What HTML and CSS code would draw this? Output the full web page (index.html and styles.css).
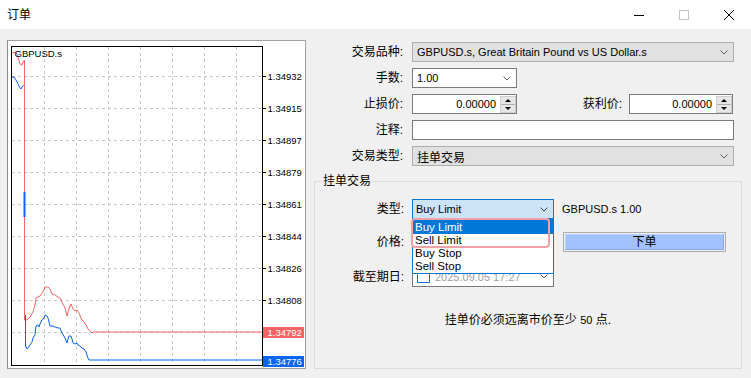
FILE: index.html
```html
<!DOCTYPE html>
<html lang="zh">
<head>
<meta charset="utf-8">
<title>订单</title>
<link rel="stylesheet" href="styles.css">
</head>
<body>
<div class="titlebar">
  <span class="title">订单</span>
  <div class="winbtns">
    <div class="winbtn"><svg width="10" height="10" viewBox="0 0 10 10"><line x1="0" y1="5.5" x2="10" y2="5.5" stroke="#000" stroke-width="1"/></svg></div>
    <div class="winbtn"><svg width="10" height="10" viewBox="0 0 10 10"><rect x="0.5" y="0.5" width="9" height="9" fill="none" stroke="#c4c4c4" stroke-width="1"/></svg></div>
    <div class="winbtn"><svg width="10" height="10" viewBox="0 0 10 10"><path d="M0 0 L10 10 M10 0 L0 10" stroke="#000" stroke-width="1"/></svg></div>
  </div>
</div>
<div class="content">
  <div class="chart">
    <svg class="axis" width="297" height="327" viewBox="0 0 297 327">
      <g stroke="#c8c8c8" stroke-width="1" stroke-dasharray="3 3">
        <line x1="36.5" y1="6" x2="36.5" y2="324"/>
        <line x1="68.5" y1="6" x2="68.5" y2="324"/>
        <line x1="100.5" y1="6" x2="100.5" y2="324"/>
        <line x1="132.5" y1="6" x2="132.5" y2="324"/>
        <line x1="164.5" y1="6" x2="164.5" y2="324"/>
        <line x1="196.5" y1="6" x2="196.5" y2="324"/>
        <line x1="228.5" y1="6" x2="228.5" y2="324"/>
        <line x1="4" y1="35.5" x2="254" y2="35.5"/>
        <line x1="4" y1="67.5" x2="254" y2="67.5"/>
        <line x1="4" y1="99.5" x2="254" y2="99.5"/>
        <line x1="4" y1="131.5" x2="254" y2="131.5"/>
        <line x1="4" y1="163.5" x2="254" y2="163.5"/>
        <line x1="4" y1="195.5" x2="254" y2="195.5"/>
        <line x1="4" y1="227.5" x2="254" y2="227.5"/>
        <line x1="4" y1="259.5" x2="254" y2="259.5"/>
        <line x1="4" y1="291.5" x2="254" y2="291.5"/>
      </g>
      <g stroke="#000" stroke-width="1">
        <line x1="254" y1="35.5" x2="258" y2="35.5"/>
        <line x1="254" y1="67.5" x2="258" y2="67.5"/>
        <line x1="254" y1="99.5" x2="258" y2="99.5"/>
        <line x1="254" y1="131.5" x2="258" y2="131.5"/>
        <line x1="254" y1="163.5" x2="258" y2="163.5"/>
        <line x1="254" y1="195.5" x2="258" y2="195.5"/>
        <line x1="254" y1="227.5" x2="258" y2="227.5"/>
        <line x1="254" y1="259.5" x2="258" y2="259.5"/>
      </g>
      <g class="lbl-txt">
        <text x="259.5" y="39">1.34932</text>
        <text x="259.5" y="71">1.34915</text>
        <text x="259.5" y="103">1.34897</text>
        <text x="259.5" y="135">1.34879</text>
        <text x="259.5" y="167">1.34861</text>
        <text x="259.5" y="199">1.34844</text>
        <text x="259.5" y="231">1.34826</text>
        <text x="259.5" y="263">1.34808</text>
      </g>
      <polyline fill="none" stroke="#f46464" stroke-width="1" points="4,12 8,11 10,16 12,23 14,24 15,21 16.5,19 16.5,279 19,279 22,276 25,271 27,264 28,257 32,255 35,251 37,246 40,246 42,248 44,253 47,254 50,256 52,257 54,261 57,267 59,275 60,271 62,265 63,263 65,268 67,270 69,269 71,272 73,277 74,279 76,281 78,284 80,288 82,290 84,292 85,291 254,291"/>
      <polyline fill="none" stroke="#0a64f5" stroke-width="1" points="4,36 6,36 8,39 10,43 12,47 13,48 14,46 15,45 15.5,44"/>
      <line x1="16.5" y1="151" x2="16.5" y2="176" stroke="#0a64f5" stroke-width="2"/>
      <polyline fill="none" stroke="#0a64f5" stroke-width="1" points="17.5,274 17.5,305 19,308 20,307 22,304 24,301 25,297 27,294 28,285 30,284 31,286 32,283 34,279 36,277 37,274 39,275 40,277 42,285 45,285 47,286 50,287 52,287 54,292 57,297 59,302 60,298 61,295 63,295 64,298 65,302 67,303 69,302 70,304 72,305 74,307 76,308 78,311 80,317 81,319 254,319"/>
      <rect x="3.5" y="5.5" width="251" height="319" fill="none" stroke="#000" stroke-width="1"/>
      <rect x="255" y="286" width="41" height="11" fill="#f46464"/>
      <rect x="255" y="315" width="41" height="11" fill="#0a64f5"/>
      <text class="tag" x="259.5" y="295">1.34792</text>
      <text class="tag" x="259.5" y="324">1.34776</text>
      <text class="sym" x="6.5" y="16">GBPUSD.s</text>
    </svg>
  </div>

  <div class="form">
    <div class="row">
      <span class="lbl">交易品种:</span>
      <div class="combo grey w322"><span class="en">GBPUSD.s, Great Britain Pound vs US Dollar.s</span><svg class="chev" width="8" height="5" viewBox="0 0 8 5"><path d="M0.5 0.5 L4 4 L7.5 0.5" fill="none" stroke="#606060"/></svg></div>
    </div>
    <div class="row">
      <span class="lbl">手数:</span>
      <div class="combo white w105"><span class="en">1.00</span><svg class="chev" width="8" height="5" viewBox="0 0 8 5"><path d="M0.5 0.5 L4 4 L7.5 0.5" fill="none" stroke="#606060"/></svg></div>
    </div>
    <div class="row">
      <span class="lbl">止损价:</span>
      <div class="spin w105"><span class="val en">0.00000</span><div class="arrows"><span class="up"></span><span class="down"></span></div></div>
      <span class="lbl lbl2">获利价:</span>
      <div class="spin w104"><span class="val en">0.00000</span><div class="arrows"><span class="up"></span><span class="down"></span></div></div>
    </div>
    <div class="row">
      <span class="lbl">注释:</span>
      <div class="input w322"></div>
    </div>
    <div class="row">
      <span class="lbl">交易类型:</span>
      <div class="combo grey w322"><span class="cn">挂单交易</span><svg class="chev" width="8" height="5" viewBox="0 0 8 5"><path d="M0.5 0.5 L4 4 L7.5 0.5" fill="none" stroke="#606060"/></svg></div>
    </div>

    <fieldset class="group">
      <legend>挂单交易</legend>
      <div class="grow">
        <span class="lbl glbl">类型:</span>
        <div class="combo sel w142"><span class="en">Buy Limit</span><svg class="chev" width="8" height="5" viewBox="0 0 8 5"><path d="M0.5 0.5 L4 4 L7.5 0.5" fill="none" stroke="#404040"/></svg>
          <ul class="droplist">
            <li class="hl">Buy Limit</li>
            <li>Sell Limit</li>
            <li>Buy Stop</li>
            <li>Sell Stop</li>
          </ul>
          <div class="mark"></div>
        </div>
        <span class="en info">GBPUSD.s 1.00</span>
      </div>
      <div class="grow g2">
        <span class="lbl glbl">价格:</span>
        <div class="spin w142"><span class="val en">0.00000</span><div class="arrows"><span class="up"></span><span class="down"></span></div></div>
        <div class="btn"><span class="btn-in">下单</span></div>
      </div>
      <div class="grow g3">
        <span class="lbl glbl">截至期日:</span>
        <div class="date w142"><span class="check"></span><span class="en dtxt">2025.09.05 17:27</span><svg class="chev" width="8" height="5" viewBox="0 0 8 5"><path d="M0.5 0.5 L4 4 L7.5 0.5" fill="none" stroke="#606060"/></svg></div>
      </div>
      <p class="msg">挂单价必须远离市价至少 <span class="en">50</span> 点.</p>
    </fieldset>
  </div>
</div>
</body>
</html>
```

FILE: styles.css
```css
* { box-sizing: border-box; }

body {
  margin: 0;
  width: 751px;
  height: 378px;
  overflow: hidden;
  background: #f0f0f0;
  font-family: "Liberation Sans", "Noto Sans CJK SC", sans-serif;
  font-size: 12px;
  color: #000;
}

.titlebar {
  height: 29px;
  background: #fff;
  display: flex;
  align-items: center;
  padding-left: 7px;
}
.title { flex: 1; font-size: 12px; line-height: 16px; }
.winbtns { display: flex; }
.winbtn {
  width: 45px;
  height: 29px;
  display: flex;
  align-items: center;
  justify-content: center;
}
.winbtn svg { display: block; }

.content {
  display: flex;
  padding-top: 11px;
}

.chart {
  margin-left: 7px;
  width: 299px;
  height: 329px;
  border: 1px solid #a0a0a0;
  border-left-color: #8c8c8c;
  background: #fff;
}
.chart svg { display: block; }
.axis text { font-family: "Liberation Sans", sans-serif; font-size: 9.5px; fill: #000; }
.axis text.tag { fill: #fff; }

.form {
  margin-left: 8px;
  width: 428px;
  padding-top: 2px;
  display: flex;
  flex-direction: column;
  gap: 6px;
}

.row {
  display: flex;
  align-items: center;
  height: 20px;
}

.lbl {
  width: 89px;
  margin-right: 9px;
  text-align: right;
  white-space: nowrap;
  font-size: 12px;
  line-height: 16px;
}
.lbl2 { width: 105px; margin-right: 7px; }

.en { font-family: "Liberation Sans", sans-serif; font-size: 11px; }
.cn { font-size: 12px; }

.w322 { width: 322px; }
.w105 { width: 105px; }
.w104 { width: 104px; }
.w142 { width: 142px; }

.combo {
  position: relative;
  height: 20px;
  display: flex;
  align-items: center;
  padding-left: 4px;
  border: 1px solid #adadad;
  background: #e1e1e1;
  white-space: nowrap;
}
.combo.white { background: #fff; border-color: #7a7a7a; }
.combo.sel { background: #cce4f7; border-color: #0078d7; padding-left: 3px; }
.chev { margin-left: auto; margin-right: 5px; flex: none; }

.spin {
  height: 20px;
  display: flex;
  border: 1px solid #7a7a7a;
  background: #fff;
}
.spin .val {
  flex: 1;
  text-align: right;
  padding-right: 4px;
  line-height: 18px;
}
.arrows {
  width: 16px;
  margin: 1px 0 0 0;
  height: 17px;
  display: flex;
  flex-direction: column;
  background: #e6e6e6;
  border: 1px solid #cfcfcf;
}
.arrows span {
  flex: 1;
  display: flex;
  align-items: center;
  justify-content: center;
}
.arrows .up { border-bottom: 1px solid #adadad; }
.arrows .up::after {
  content: "";
  border-left: 3px solid transparent;
  border-right: 3px solid transparent;
  border-bottom: 3px solid #000;
}
.arrows .down::after {
  content: "";
  border-left: 3px solid transparent;
  border-right: 3px solid transparent;
  border-top: 3px solid #000;
}

.input {
  height: 20px;
  border: 1px solid #7a7a7a;
  background: #fff;
}

.group {
  margin: 1px 0 0 0;
  padding: 10px 0 0 0;
  width: 428px;
  height: 196px;
  border: 1px solid #dcdcdc;
  min-width: 0;
}
.group legend {
  margin-left: 6px;
  padding: 0 2px;
  font-size: 12px;
  line-height: 16px;
}

.grow {
  display: flex;
  align-items: center;
  height: 20px;
}
.glbl { margin-right: 8px; }
.g2 { margin-top: 13px; }
.g3 { margin-top: 14px; height: 21px; }

.info { margin-left: 8px; }

.droplist {
  position: absolute;
  top: 19px;
  left: -1px;
  width: 142px;
  margin: 0;
  padding: 0;
  list-style: none;
  background: #fff;
  border: 1px solid #0078d7;
  z-index: 2;
}
.droplist li {
  height: 13px;
  line-height: 13px;
  padding-left: 2px;
  font-family: "Liberation Sans", sans-serif;
  font-size: 11.5px;
}
.droplist li.hl {
  height: 14px;
  line-height: 15px;
  background: #0078d7;
  color: #fff;
}

.mark {
  position: absolute;
  top: 18px;
  left: -2px;
  width: 139px;
  height: 30px;
  border: 2px solid #f2a0a8;
  border-radius: 4px;
  z-index: 3;
}

.btn {
  margin-left: 9px;
  width: 163px;
  height: 20px;
  border: 1px solid #adadad;
  padding: 1px;
  display: flex;
}
.btn-in {
  flex: 1;
  background: #a3c1fd;
  box-shadow: inset -1px -1px 0 #86a6f2, inset 1px 1px 0 #b9d0fe;
  text-align: center;
  font-size: 12px;
  line-height: 16px;
}

.date {
  height: 21px;
  display: flex;
  align-items: center;
  border: 1px solid #7a7a7a;
  background: #fff;
}
.check {
  width: 13px;
  height: 13px;
  margin-left: 4px;
  border: 1px solid #1a6fc4;
  background: #fff;
  flex: none;
}
.dtxt { margin-left: 5px; color: #a0a0a0; }

.msg {
  margin: 25px 0 0 0;
  text-align: center;
  font-size: 12px;
  line-height: 16px;
}
```
